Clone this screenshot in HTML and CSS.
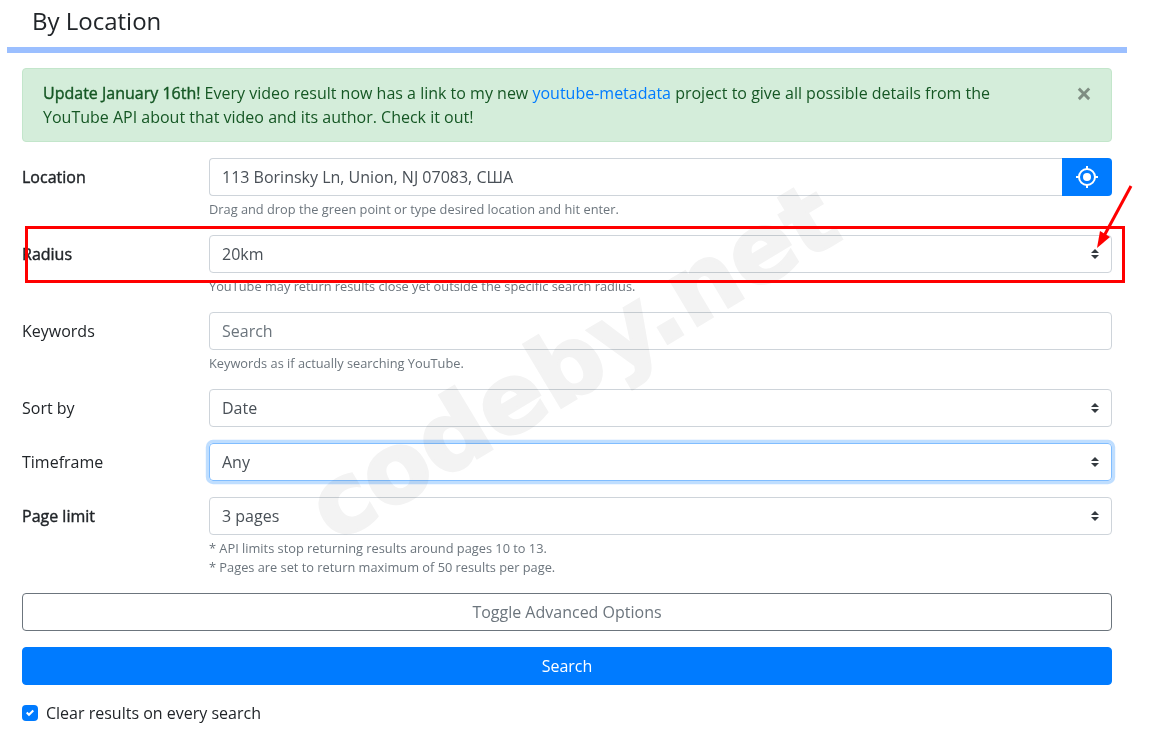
FILE: index.html
```html
<!DOCTYPE html>
<html lang="en">
<head>
  <meta charset="UTF-8" />
  <title>By Location</title>
  <link rel="stylesheet" href="styles.css">
</head>
<body>

  <div class="panel">
    <h2 class="panel-title">By Location</h2>

    <div class="panel-body">
      <div class="alert">
        <strong>Update January 16th!</strong> Every video result now has a link to my new <a href="#">youtube-metadata</a> project to give all possible details from the YouTube API about that video and its author. Check it out!
        <button class="close" type="button">&times;</button>
      </div>

      <div class="form-row">
        <label class="form-label strong">Location</label>
        <div>
          <div class="input-group">
            <input class="form-control" type="text" value="113 Borinsky Ln, Union, NJ 07083, США">
            <button class="locate-btn" type="button">
              <svg width="24" height="24" viewBox="0 0 24 24">
                <circle cx="12" cy="12" r="8" fill="none" stroke="#fff" stroke-width="2" />
                <circle cx="12" cy="12" r="4" fill="#fff" />
                <path d="M12 1v3M12 20v3M1 12h3M20 12h3" stroke="#fff" stroke-width="2" />
              </svg>
            </button>
          </div>
          <small class="form-text">Drag and drop the green point or type desired location and hit enter.</small>
        </div>
      </div>

      <div class="form-row">
        <label class="form-label strong">Radius</label>
        <div>
          <select class="form-select">
            <option>20km</option>
          </select>
          <small class="form-text">YouTube may return results close yet outside the specific search radius.</small>
        </div>
      </div>

      <div class="form-row">
        <label class="form-label">Keywords</label>
        <div>
          <input class="form-control" type="text" placeholder="Search">
          <small class="form-text">Keywords as if actually searching YouTube.</small>
        </div>
      </div>

      <div class="form-row">
        <label class="form-label">Sort by</label>
        <select class="form-select">
          <option>Date</option>
        </select>
      </div>

      <div class="form-row">
        <label class="form-label">Timeframe</label>
        <select class="form-select focused">
          <option>Any</option>
        </select>
      </div>

      <div class="form-row">
        <label class="form-label strong">Page limit</label>
        <div>
          <select class="form-select">
            <option>3 pages</option>
          </select>
          <small class="form-text">* API limits stop returning results around pages 10 to 13.<br>* Pages are set to return maximum of 50 results per page.</small>
        </div>
      </div>

      <button class="btn btn-outline" type="button">Toggle Advanced Options</button>
      <button class="btn btn-primary" type="button">Search</button>

      <label class="check">
        <input type="checkbox" checked>
        Clear results on every search
      </label>
    </div>
  </div>

  <!-- watermark and red annotation drawn over the page -->
  <div class="watermark">codeby.net</div>
  <svg class="annotation" width="1153" height="744" viewBox="0 0 1153 744">
    <rect x="26.5" y="227.5" width="1097" height="54" fill="none" stroke="#ff0000" stroke-width="3" />
    <path d="M1131 186L1104 236" stroke="#ff0000" stroke-width="3" fill="none" />
    <path d="M1097 248L1100 231L1110 237z" fill="#ff0000" />
  </svg>

</body>
</html>
```

FILE: styles.css
```css
* {
  box-sizing: border-box;
}

body {
  margin: 0;
  font-family: "Open Sans", sans-serif;
  font-size: 16px;
  line-height: 1.5;
  color: #212529;
  background-color: #fff;
}

.panel {
  width: 1120px;
  margin-left: 7px;
}

.panel-title {
  margin: 0;
  padding: 6px 25px 12px;
  font-size: 24px;
  font-weight: 400;
  line-height: 29px;
  border-bottom: 6px solid #9bbfff;
}

.panel-body {
  padding: 15px;
}

.alert {
  position: relative;
  margin-bottom: 16px;
  padding: 12px 64px 12px 20px;
  color: #155724;
  background-color: #d4edda;
  border: 1px solid #c3e6cb;
  border-radius: 4px;
}

/* the bold in this page is a thickened regular, same widths as regular */
.alert strong {
  font-weight: 400;
  -webkit-text-stroke: 0.4px currentColor;
}

.alert a {
  color: #007bff;
  text-decoration: none;
}

.close {
  position: absolute;
  top: 0;
  right: 0;
  padding: 12px 19px;
  border: 0;
  background: none;
  font-family: "Open Sans", sans-serif;
  font-size: 28px;
  font-weight: 700;
  line-height: 24px;
  color: #000;
  opacity: 0.4;
}

.form-row {
  display: grid;
  grid-template-columns: 187px 1fr;
  margin-bottom: 16px;
}

.form-label {
  padding-top: 7px;
  line-height: 24px;
}

.form-label.strong {
  -webkit-text-stroke: 0.4px currentColor;
}

.form-control,
.form-select {
  display: block;
  width: 100%;
  height: 38px;
  padding: 6px 12px;
  font-family: "Open Sans", sans-serif;
  font-size: 16px;
  line-height: 24px;
  color: #495057;
  background-color: transparent;
  border: 1px solid #ced4da;
  border-radius: 4px;
  outline: none;
}

.form-control::placeholder {
  color: #6c757d;
  opacity: 1;
}

.form-select {
  appearance: none;
  background-image: url("data:image/svg+xml,%3csvg xmlns='http://www.w3.org/2000/svg' viewBox='0 0 4 5'%3e%3cpath fill='%23343a40' d='M2 0L0 2h4zm0 5L0 3h4z'/%3e%3c/svg%3e");
  background-repeat: no-repeat;
  background-position: right 12px center;
  background-size: 8px 10px;
}

.form-select.focused {
  border-color: #80bdff;
  box-shadow: 0 0 0 3.2px rgba(0, 123, 255, 0.25);
}

.input-group {
  display: flex;
}

.input-group .form-control {
  flex: 1;
  border-right: 0;
  border-radius: 4px 0 0 4px;
}

.locate-btn {
  display: flex;
  align-items: center;
  justify-content: center;
  width: 50px;
  height: 38px;
  padding: 0;
  border: 0;
  border-radius: 0 4px 4px 0;
  background-color: #007bff;
}

.form-text {
  display: block;
  margin-top: 4px;
  font-size: 12.8px;
  line-height: 19px;
  color: #6c757d;
}

.btn {
  display: block;
  width: 100%;
  height: 38px;
  margin-bottom: 16px;
  padding: 6px 12px;
  font-family: "Open Sans", sans-serif;
  font-size: 16px;
  line-height: 24px;
  text-align: center;
  border-radius: 4px;
}

.btn-outline {
  color: #6c757d;
  background-color: transparent;
  border: 1px solid #6c757d;
}

.btn-primary {
  color: #fff;
  background-color: #007bff;
  border: 1px solid #007bff;
}

.check {
  display: flex;
  align-items: center;
  gap: 8px;
  height: 24px;
}

.check input {
  appearance: none;
  width: 16px;
  height: 16px;
  margin: 0;
  border-radius: 4px;
  background-color: #007bff;
  background-image: url("data:image/svg+xml,%3csvg xmlns='http://www.w3.org/2000/svg' viewBox='0 0 8 8'%3e%3cpath fill='%23fff' d='M6.564.75l-3.59 3.612-1.538-1.55L0 4.26 2.974 7.25 8 2.193z'/%3e%3c/svg%3e");
  background-repeat: no-repeat;
  background-position: center;
  background-size: 8px 8px;
}

.watermark {
  position: absolute;
  left: 275px;
  top: 314px;
  font-family: "DejaVu Sans", sans-serif;
  font-size: 96px;
  font-weight: 700;
  line-height: 1;
  white-space: nowrap;
  color: #f3f3f3;
  -webkit-text-stroke: 3px #f3f3f3;
  mix-blend-mode: multiply;
  transform: rotate(-31deg);
  pointer-events: none;
}

.annotation {
  position: absolute;
  left: 0;
  top: 0;
  pointer-events: none;
}
```
